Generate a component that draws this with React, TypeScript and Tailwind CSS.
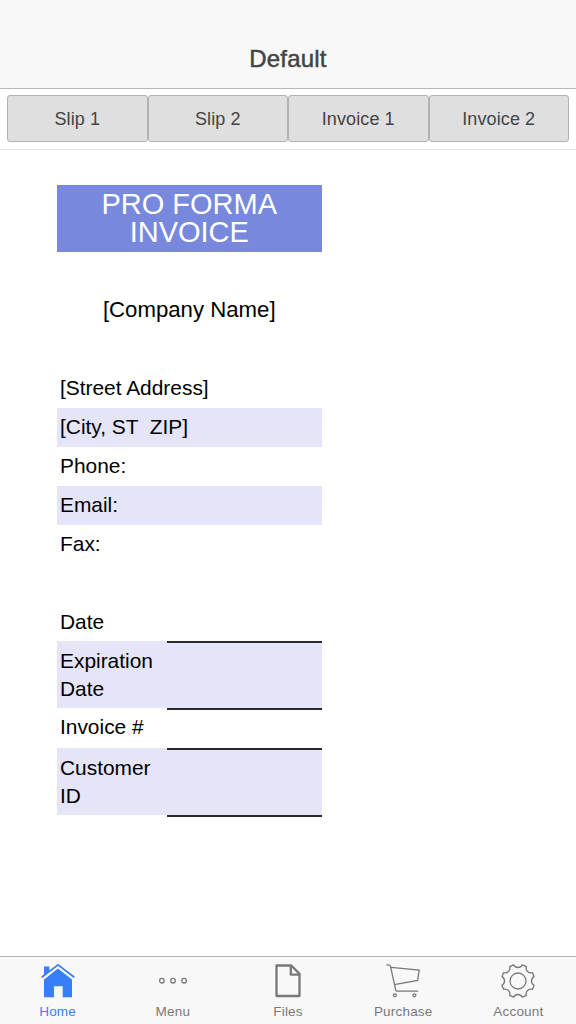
import type { ReactNode } from "react";

interface InvoiceRow {
  lines: string[];
  className: string;
  field?: boolean;
}

const formats = ["Slip 1", "Slip 2", "Invoice 1", "Invoice 2"];

const rows: InvoiceRow[] = [
  { lines: ["[Street Address]"], className: "h-[39px] pt-[5px]" },
  { lines: ["[City, ST  ZIP]"], className: "h-[39px] pt-[5px] bg-[#e5e5f9]" },
  { lines: ["Phone:"], className: "h-[39px] pt-[5px]" },
  { lines: ["Email:"], className: "h-[39px] pt-[5px] bg-[#e5e5f9]" },
  { lines: ["Fax:"], className: "h-[39px] pt-[5px]" },
  { lines: [], className: "h-[39px] pt-[5px]" },
  { lines: ["Date"], className: "h-[38px] pt-[5px]", field: true },
  { lines: ["Expiration", "Date"], className: "h-[67px] pt-[6px] bg-[#e5e5f9]", field: true },
  { lines: ["Invoice #"], className: "h-[40px] pt-[5px]", field: true },
  { lines: ["Customer", "ID"], className: "h-[67px] pt-[6px] bg-[#e5e5f9]", field: true },
];

// Eight-toothed outline, centred in a 34 unit box
function gearPath() {
  const c = 17;
  const at = (r: number, deg: number) => {
    const a = (deg * Math.PI) / 180;
    return `${(c + r * Math.cos(a)).toFixed(2)} ${(c + r * Math.sin(a)).toFixed(2)}`;
  };
  let d = `M${at(16.7, -15)}`;
  for (let i = 0; i < 8; i++) {
    const a = i * 45;
    d += `C${at(12.9, a - 12)} ${at(12.9, a + 12)} ${at(16.7, a + 15)}`;
    d += `L${at(16.7, a + 30)}`;
  }
  return d + "Z";
}

const tabs: { label: string; icon: ReactNode }[] = [
  {
    label: "Home",
    icon: (
      <svg className="w-[34px] h-[34px]" viewBox="0 0 34 34" fill="currentColor">
        <path d="M17 4.4 31 15.5V33.2H21.7V22.2H13V33.2H3V15.5Z" />
        <path d="M.8 13.6 17 .9 33.2 13.6" fill="none" stroke="#f8f8f8" strokeWidth="4.6" />
        <path d="M3 2.6h5.4v4.8L3 11.6z" />
        <path d="M.7 13.3 17 .9 33.3 13.3" fill="none" stroke="currentColor" strokeWidth="1.7" />
      </svg>
    ),
  },
  {
    label: "Menu",
    icon: (
      <svg className="w-[34px] h-[34px]" viewBox="0 0 34 34" fill="none" stroke="currentColor" strokeWidth="1.3">
        <circle cx="5.9" cy="16.7" r="2.3" />
        <circle cx="17" cy="16.7" r="2.3" />
        <circle cx="28.1" cy="16.7" r="2.3" />
      </svg>
    ),
  },
  {
    label: "Files",
    icon: (
      <svg className="w-[34px] h-[34px]" viewBox="0 0 34 34" fill="none" stroke="currentColor" strokeWidth="2.3" strokeLinejoin="round">
        <path d="M5.5 1.5H20.3L28.5 9.9V32H5.5Z" />
        <path d="M19.8 1.5V10.6H28.5" />
      </svg>
    ),
  },
  {
    label: "Purchase",
    icon: (
      <svg className="w-[34px] h-[34px]" viewBox="0 0 34 34" fill="none" stroke="currentColor" strokeWidth="1.3">
        <path d="M.4 .8H2.6Q4.1 .8 4.5 2.3L9.7 25.8Q9.9 27.1 11.2 27.1H32.2" />
        <path d="M5.1 3.4 33.2 6.1 31.6 16.5 8.3 20.6" />
        <circle cx="8.9" cy="31.3" r="1.5" />
        <circle cx="28.4" cy="31.3" r="1.5" />
      </svg>
    ),
  },
  {
    label: "Account",
    icon: (
      <svg className="w-[34px] h-[34px]" viewBox="0 0 34 34" fill="none" stroke="currentColor" strokeWidth="1.3" strokeLinejoin="round">
        <path d={gearPath()} />
        <circle cx="17" cy="17" r="8" />
      </svg>
    ),
  },
];

export default function App() {
  return (
    <div className="flex h-screen flex-col overflow-hidden bg-white font-['Liberation_Sans',Arial,sans-serif]">
      <header className="flex h-[89px] shrink-0 items-end justify-center border-b border-[#b8b8b8] bg-[#f8f8f8] pb-[11px]">
        <h1 className="text-[24px] leading-9 tracking-[0.2px] text-[#444] [-webkit-text-stroke:0.5px_#444]">
          Default
        </h1>
      </header>

      <div className="flex h-[61px] shrink-0 border-b border-[#e4e4e4] px-[7px] pt-[6px]">
        {formats.map((name) => (
          <button
            key={name}
            className="h-[47px] flex-1 rounded-[3px] border-[1.5px] border-[#b2b2b2] bg-[#dfdfdf] pt-[2px] text-[18px] tracking-[0.1px] text-[#444]"
          >
            {name}
          </button>
        ))}
      </div>

      <main className="flex-1 pt-[35px] pl-[57px] text-black">
        <div className="w-[264.5px]">
          <div className="flex h-[67px] justify-center bg-[#7788dd] pt-[5px] text-center text-[29px] leading-7 text-white">
            <h2>
              <span className="block">PRO FORMA</span>
              <span className="block">INVOICE</span>
            </h2>
          </div>
          <div className="flex h-[117px] items-center justify-center pb-[2px] text-[22.2px]">[Company Name]</div>

          {rows.map((row, i) => (
            <div key={i} className={`flex ${row.className}`}>
              <div className="w-[110px] shrink-0 pl-[3px] text-[20.9px] leading-7 whitespace-pre">
                {row.lines.map((line) => (
                  <div key={line}>{line}</div>
                ))}
              </div>
              {row.field && <div className="-mb-[2px] flex-1 border-b-2 border-[#2b2b2e]" />}
            </div>
          ))}
        </div>
      </main>

      <nav className="flex h-[68px] shrink-0 border-t border-[#b5b5b5] bg-[#f8f8f8]">
        {tabs.map((tab, i) => (
          <a
            key={tab.label}
            className={`flex flex-1 flex-col items-center pt-[7px] ${i === 0 ? "text-[#377ef7]" : "text-[#787878]"}`}
          >
            {tab.icon}
            <span className="mt-[5px] text-[13.5px] leading-[18px] tracking-[0.2px]">{tab.label}</span>
          </a>
        ))}
      </nav>
    </div>
  );
}
